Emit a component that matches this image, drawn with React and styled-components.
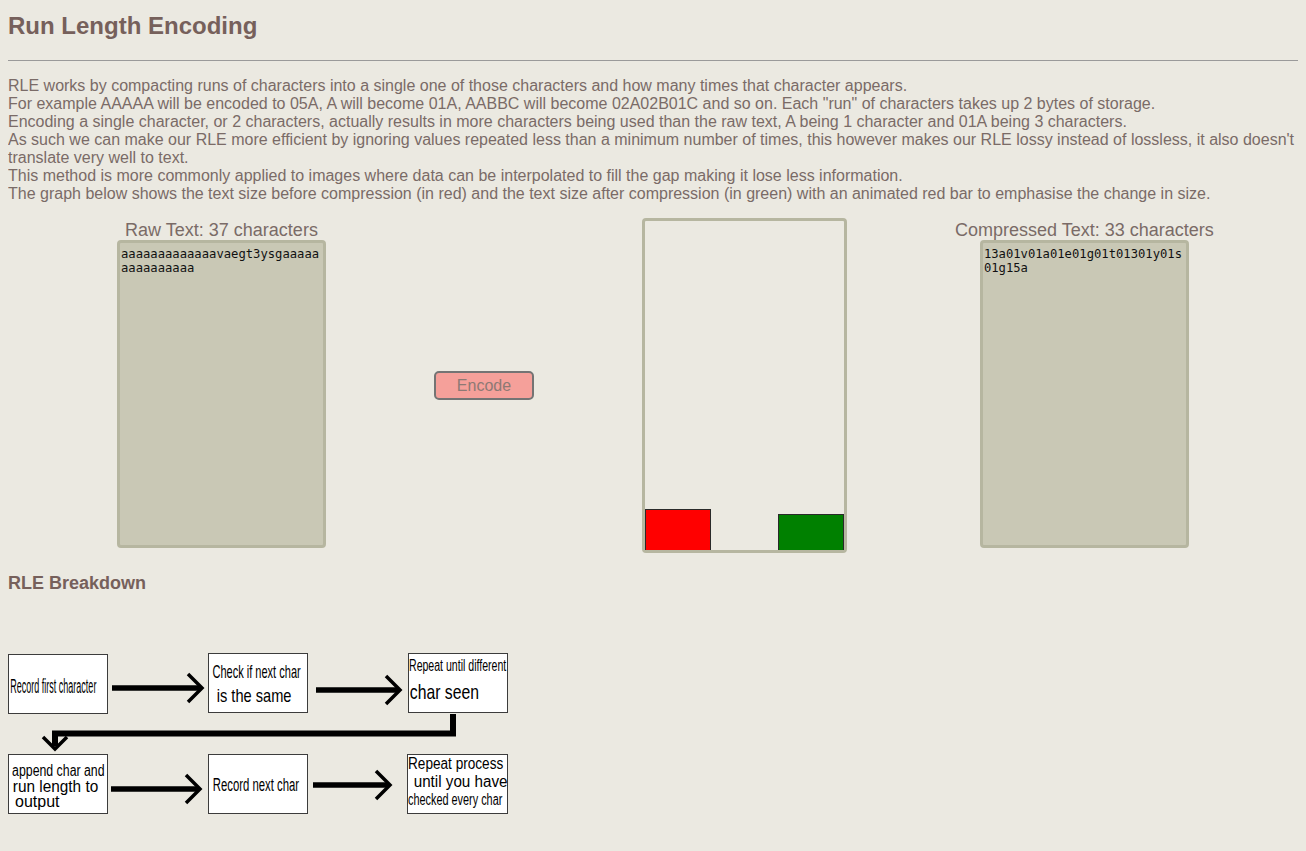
import React from "react";
import styled, { createGlobalStyle } from "styled-components";

const Global = createGlobalStyle`
  html, body { background: #ebe9e1; }
  body {
    margin: 8px;
    font-family: "Liberation Sans", Arial, sans-serif;
    color: #7a6b67;
    overflow: hidden;
  }
`;

const Title = styled.h1`
  margin: 4px 0 0;
  font-size: 24px;
  line-height: 28px;
  font-weight: bold;
  color: #76605b;
`;

const Rule = styled.hr`
  margin: 20px -8px 0 0;
  border: none;
  border-top: 1px solid #9a9a9a;
  height: 0;
`;

const Intro = styled.p`
  margin: 16px 0 0;
  font-size: 16px;
  line-height: 18px;
  color: #7a6b67;
`;

const Stage = styled.div`
  display: flex;
  align-items: flex-start;
  gap: 108px;
  padding-left: 109px;
  margin-top: 15px;
`;

const Column = styled.div`
  display: flex;
  flex-direction: column;
  align-items: center;
  gap: 1px;
`;

const Label = styled.div`
  padding-top: 3px;
  font-size: 18px;
  line-height: 18px;
  color: #7a6b67;
  white-space: nowrap;
`;

const TextBox = styled.div`
  box-sizing: border-box;
  width: 209px;
  height: 308px;
  background: #c9c8b5;
  border: 3px solid #b6b6a0;
  border-radius: 4px;
  padding: 4px 1px;
  font-family: "DejaVu Sans Mono", monospace;
  font-size: 12.2px;
  line-height: 14px;
  color: #111;
  word-break: break-all;
`;

const EncodeButton = styled.button`
  align-self: center;
  box-sizing: border-box;
  width: 100px;
  height: 29px;
  background: #f5a09a;
  border: 2px solid #747474;
  border-radius: 5px;
  font-family: "Liberation Sans", Arial, sans-serif;
  font-size: 16px;
  color: #8d7974;
  padding: 0;
  cursor: pointer;
`;

const Chart = styled.div`
  box-sizing: border-box;
  width: 205px;
  height: 335px;
  border: 3px solid #b6b6a0;
  border-radius: 4px;
  display: flex;
  align-items: flex-end;
  justify-content: space-between;
`;

const Bar = styled.div`
  box-sizing: border-box;
  width: 66px;
  background: ${(p) => p.$color};
  border: 1px solid #2a2a2a;
  border-bottom: none;
`;

const SubTitle = styled.h3`
  margin: 19px 0 0;
  font-size: 18px;
  line-height: 22px;
  font-weight: bold;
  color: #76605b;
`;

const Diagram = styled.div`
  display: flex;
  flex-direction: column;
  width: 510px;
  margin-top: 59px;
`;

const Row = styled.div`
  display: flex;
  align-items: flex-start;
`;

const Box = styled.div`
  box-sizing: border-box;
  width: ${(p) => p.$w || 100}px;
  height: 60px;
  margin-top: ${(p) => p.$mt || 0}px;
  padding-top: ${(p) => p.$pt}px;
  display: flex;
  flex-direction: column;
  background: #fff;
  border: 1px solid #3c3c3c;
  overflow: hidden;
  color: #000;
  font-family: "Liberation Sans", Arial, sans-serif;
`;

const Text = styled.div`
  padding-left: ${(p) => p.$pl || 0}px;
  font-size: ${(p) => p.$size}px;
  line-height: ${(p) => p.$lh}px;
  height: ${(p) => p.$lh}px;
  transform: scaleX(${(p) => p.$sx || 1});
  transform-origin: left center;
  white-space: nowrap;
`;

const ArrowCell = styled.svg`
  display: block;
  flex: none;
`;

const Connector = styled.svg`
  display: block;
`;

const raw = "aaaaaaaaaaaaavaegt3ysgaaaaaaaaaaaaaaa";
const compressed = "13a01v01a01e01g01t01301y01s01g15a";

function Arrow({ x1, x2, y, w = 100 }) {
  return (
    <ArrowCell width={w} height="60">
      <g stroke="#000" fill="none">
        <line x1={x1} y1={y} x2={x2 - 2} y2={y} strokeWidth="5.5" />
        <polyline
          points={`${x2 - 14},${y - 14} ${x2},${y} ${x2 - 14},${y + 14}`}
          strokeWidth="3.5"
        />
      </g>
    </ArrowCell>
  );
}

export default function App() {
  const rawLen = raw.length;
  const compLen = compressed.length;
  const scale = 1.1;
  return (
    <>
      <Global />
      <Title>Run Length Encoding</Title>
      <Rule />
      <Intro>
        RLE works by compacting runs of characters into a single one of those characters and how many times that character appears.
        <br />
        For example AAAAA will be encoded to 05A, A will become 01A, AABBC will become 02A02B01C and so on. Each "run" of characters takes up 2 bytes of storage.
        <br />
        Encoding a single character, or 2 characters, actually results in more characters being used than the raw text, A being 1 character and 01A being 3 characters.
        <br />
        As such we can make our RLE more efficient by ignoring values repeated less than a minimum number of times, this however makes our RLE lossy instead of lossless, it also doesn't translate very well to text.
        <br />
        This method is more commonly applied to images where data can be interpolated to fill the gap making it lose less information.
        <br />
        The graph below shows the text size before compression (in red) and the text size after compression (in green) with an animated red bar to emphasise the change in size.
      </Intro>
      <Stage>
        <Column>
          <Label>Raw Text: {rawLen} characters</Label>
          <TextBox>{raw}</TextBox>
        </Column>
        <EncodeButton>Encode</EncodeButton>
        <Chart>
          <Bar $color="#ff0000" style={{ height: Math.round(rawLen * scale) + "px" }} />
          <Bar $color="#008000" style={{ height: Math.round(compLen * scale) + "px" }} />
        </Chart>
        <Column>
          <Label>Compressed Text: {compLen} characters</Label>
          <TextBox>{compressed}</TextBox>
        </Column>
      </Stage>
      <SubTitle>RLE Breakdown</SubTitle>
      <Diagram>
        <Row>
          <Box $mt={1} $pt={19}>
            <Text $pl={3} $size={20} $lh={24} $sx={0.45}>Record first character</Text>
          </Box>
          <Arrow x1={4} x2={94} y={35} />
          <Box $pt={6}>
            <Text $pl={6} $size={19} $lh={24} $sx={0.58}>Check if next char</Text>
            <Text $pl={10} $size={19} $lh={24} $sx={0.77}>is the same</Text>
          </Box>
          <Arrow x1={8} x2={92} y={37} />
          <Box $pt={2}>
            <Text $pl={0} $size={16} $lh={20} $sx={0.66}>Repeat until different</Text>
            <Text $pl={1} $size={21} $lh={32} $sx={0.75}>char seen</Text>
          </Box>
        </Row>
        <Connector width="510" height="40">
          <g stroke="#000" fill="none">
            <polyline points="445,0 445,19.5 47,19.5 47,32" strokeWidth="6" />
            <polyline points="35,23 47,35 59,23" strokeWidth="3.5" />
          </g>
        </Connector>
        <Row>
          <Box $pt={8}>
            <Text $pl={4} $size={16} $lh={15.5} $sx={0.77}>append char and</Text>
            <Text $pl={4} $size={16} $lh={15.5} $sx={0.96}>run length to</Text>
            <Text $pl={6} $size={16} $lh={15.5} $sx={1}>output</Text>
          </Box>
          <Arrow x1={3} x2={92} y={35} />
          <Box $pt={18}>
            <Text $pl={6} $size={18} $lh={24} $sx={0.63}>Record next char</Text>
          </Box>
          <Arrow x1={5} x2={82} y={31} w={99} />
          <Box $w={101} $pt={0}>
            <Text $pl={0} $size={16} $lh={18} $sx={0.85}>Repeat process</Text>
            <Text $pl={6} $size={16} $lh={18} $sx={0.95}>until you have</Text>
            <Text $pl={0} $size={16} $lh={18} $sx={0.68}>checked every char</Text>
          </Box>
        </Row>
      </Diagram>
    </>
  );
}
